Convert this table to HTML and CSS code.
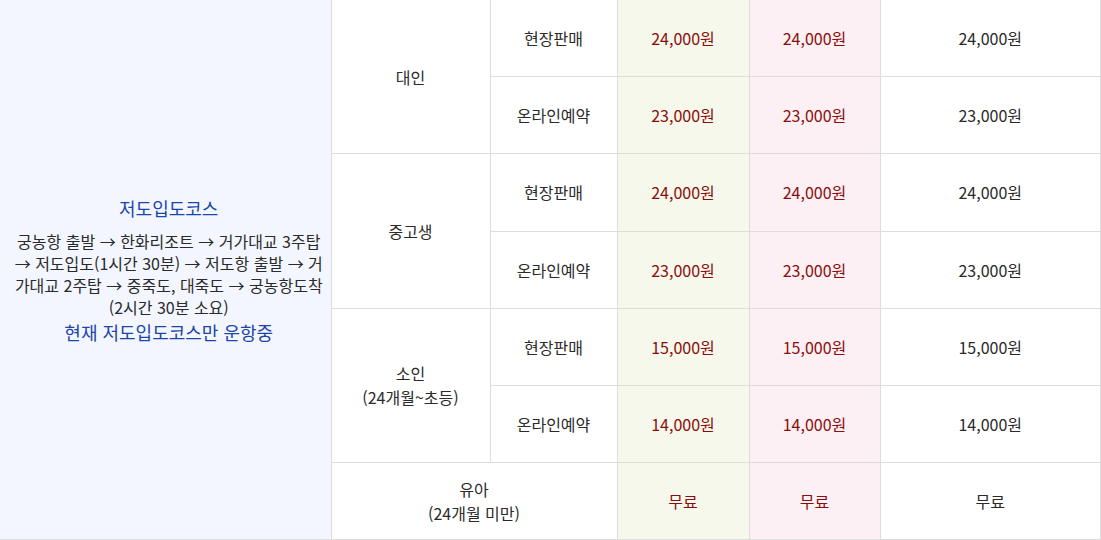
FILE: index.html
```html
<!DOCTYPE html>
<html lang="ko">

<head>
    <meta charset="UTF-8" />
    <meta name="viewport" content="width=device-width, initial-scale=1.0" />
    <title>요금안내</title>
    <link rel="stylesheet" href="styles.css">
</head>

<body>

    <table class="fare-table">
        <colgroup>
            <col class="col-course">
            <col class="col-age">
            <col class="col-type">
            <col class="col-price">
            <col class="col-price2">
            <col class="col-price3">
        </colgroup>
        <tbody>
            <tr>
                <td class="course" rowspan="7">
                    <p class="course-title">저도입도코스</p>
                    <p class="course-route">궁농항 출발 → 한화리조트 → 거가대교 3주탑 → 저도입도(1시간 30분) → 저도항 출발 → 거가대교 2주탑 → 중죽도, 대죽도 → 궁농항도착<br>(2시간 30분 소요)</p>
                    <p class="course-note">현재 저도입도코스만 운항중</p>
                </td>
                <td rowspan="2">대인</td>
                <td>현장판매</td>
                <td class="green price">24,000원</td>
                <td class="pink price">24,000원</td>
                <td>24,000원</td>
            </tr>
            <tr>
                <td>온라인예약</td>
                <td class="green price">23,000원</td>
                <td class="pink price">23,000원</td>
                <td>23,000원</td>
            </tr>
            <tr>
                <td rowspan="2">중고생</td>
                <td>현장판매</td>
                <td class="green price">24,000원</td>
                <td class="pink price">24,000원</td>
                <td>24,000원</td>
            </tr>
            <tr>
                <td>온라인예약</td>
                <td class="green price">23,000원</td>
                <td class="pink price">23,000원</td>
                <td>23,000원</td>
            </tr>
            <tr>
                <td rowspan="2">소인<br>(24개월~초등)</td>
                <td>현장판매</td>
                <td class="green price">15,000원</td>
                <td class="pink price">15,000원</td>
                <td>15,000원</td>
            </tr>
            <tr>
                <td>온라인예약</td>
                <td class="green price">14,000원</td>
                <td class="pink price">14,000원</td>
                <td>14,000원</td>
            </tr>
            <tr>
                <td colspan="2">유아<br>(24개월 미만)</td>
                <td class="green price">무료</td>
                <td class="pink price">무료</td>
                <td>무료</td>
            </tr>
        </tbody>
    </table>

</body>

</html>
```

FILE: styles.css
```css
body {
    margin: 0;
    background-color: #fff;
    font-family: "Noto Sans CJK KR", "Noto Sans", sans-serif;
    color: #2a2a2a;
}

.fare-table {
    width: 1101px;
    border-collapse: collapse;
    table-layout: fixed;
    font-size: 16px;
    line-height: 24px;
}

.col-course {
    width: 331px;
}

.col-age {
    width: 159px;
}

.col-type {
    width: 127px;
}

.col-price {
    width: 132px;
}

.col-price2 {
    width: 131px;
}

.fare-table td {
    height: 76.2px;
    padding: 0;
    border: 1px solid #dddddd;
    text-align: center;
    vertical-align: middle;
}

.fare-table tr:first-child td {
    border-top: none;
}

.fare-table td.course {
    border-left: none;
    padding: 0 7px 0 14px;
    background-color: #f3f6fe;
    line-height: 22px;
    word-break: break-all;
}

.course p {
    margin: 0;
}

.course-title {
    margin-bottom: 11px !important;
    font-size: 18px;
    color: #1c45a8;
}

.course-note {
    margin-top: 3px !important;
    font-size: 18px;
    color: #1c45a8;
}

.green {
    background-color: #f5f8ea;
}

.pink {
    background-color: #fdf0f4;
}

.price {
    color: #8a0d0d;
}
```
